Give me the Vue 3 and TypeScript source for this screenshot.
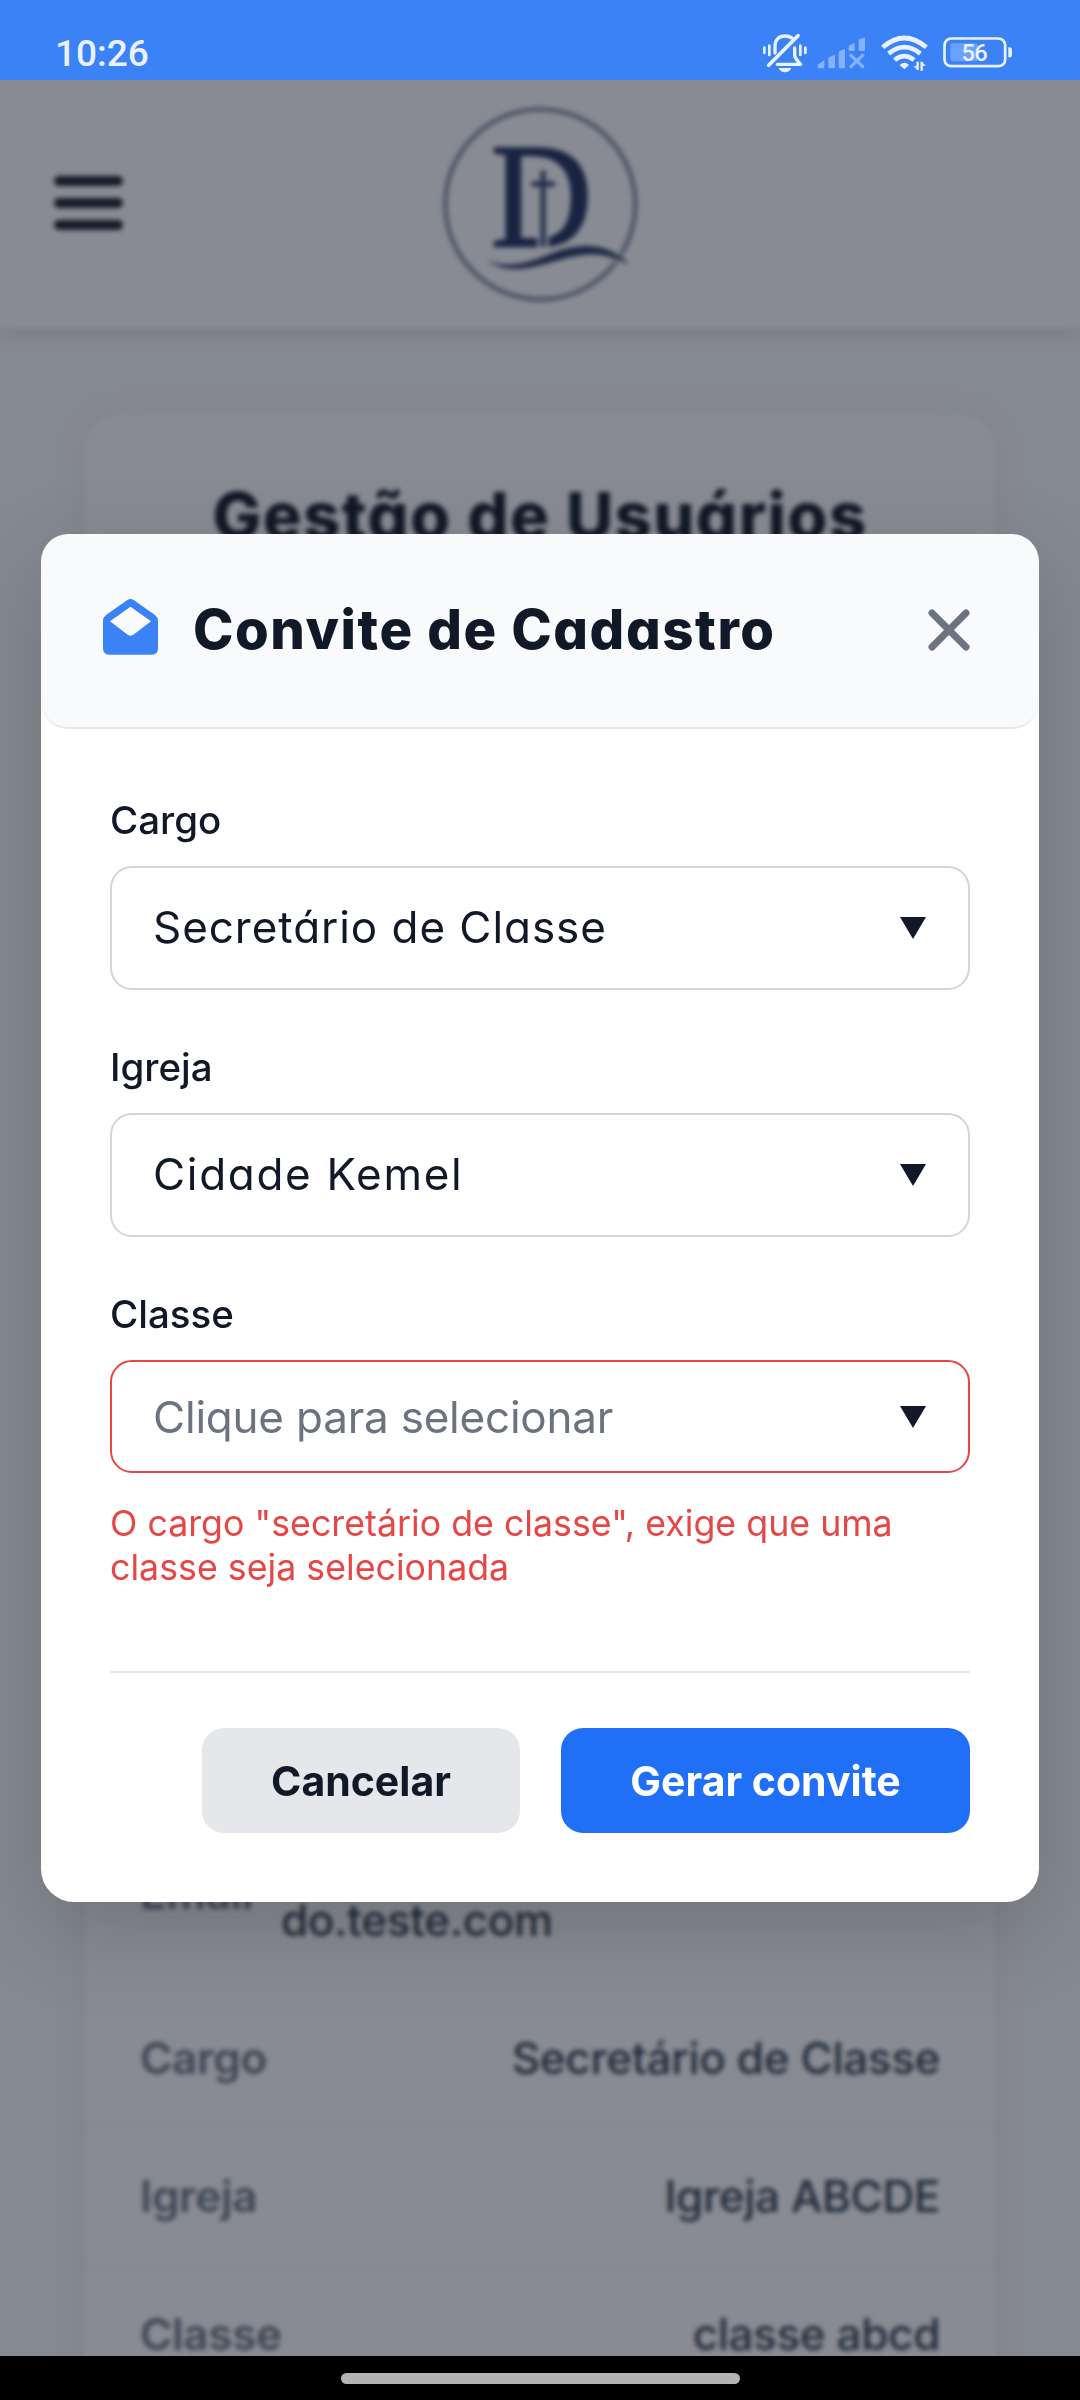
<script setup lang="ts">
interface Field {
  label: string
  value: string
  placeholder?: boolean
  kind: string
}

interface Row {
  label: string
  value: string
}

const fields: Field[] = [
  { label: 'Cargo', value: 'Secretário de Classe', kind: 'role' },
  { label: 'Igreja', value: 'Cidade Kemel', kind: 'church' },
  { label: 'Classe', value: 'Clique para selecionar', placeholder: true, kind: 'class' },
]

const rows: Row[] = [
  { label: 'Cargo', value: 'Secretário de Classe' },
  { label: 'Igreja', value: 'Igreja ABCDE' },
  { label: 'Classe', value: 'classe abcd' },
]

const errorText = 'O cargo "secretário de classe", exige que uma classe seja selecionada'
</script>

<template>
  <div class="screen">
    <div class="status">
      <span class="clock">10:26</span>
      <div class="status-icons">
        <svg class="i-bell" viewBox="66 98 138 120" fill="none" stroke="#eaf2ff" stroke-linecap="round" stroke-linejoin="round">
          <path d="M73 142V158M88 136V164M181 136V164M196 142V158" stroke-width="8" />
          <path d="M105 158V138C105 118 117 107 135 107C143 107 150 109 156 113" stroke-width="10" />
          <path d="M164 143V166Q166 176 182 192H112" stroke-width="10" />
          <path d="M174 106L86 195" stroke-width="11" />
          <path d="M116 203H154Q148 216 135 216Q122 216 116 203Z" fill="#eaf2ff" stroke="none" />
        </svg>
        <svg class="i-signal" viewBox="230 98 146 120" fill="#86b2fb">
          <path d="M232 193L252 179V200Q252 204 248 204H236Q232 204 232 200Z" />
          <path d="M264 176Q264 172 267 170L284 163V200Q284 204 280 204H268Q264 204 264 200Z" />
          <path d="M295 158Q295 154 298 152L314 146V200Q314 204 310 204H299Q295 204 295 200Z" />
          <path d="M325 140Q325 135 329 133L343 128V149Q343 152 340 152H328Q325 152 325 149Z" />
          <path d="M355 122Q355 118 359 116L375 111V149Q375 152 372 152H358Q355 152 355 149Z" />
          <path d="M332 165L367 199M367 165L332 199" stroke="#86b2fb" stroke-width="10" stroke-linecap="round" />
        </svg>
        <svg class="i-wifi" viewBox="424 98 142 120" fill="none" stroke="#eaf2ff">
          <path d="M429 141Q494 85 560 141" stroke-width="14" />
          <path d="M447 160Q494 121 542 160" stroke-width="14" />
          <path d="M465 179Q494 156 523 179" stroke-width="14" />
          <path d="M480 194Q494 180 508 194L494 207Z" fill="#eaf2ff" stroke="none" />
          <path d="M534 184V209M546 184V211" stroke-width="7" />
          <path d="M521 198H534V209ZM546 184V196H559Z" fill="#eaf2ff" stroke="none" />
        </svg>
        <svg class="i-battery" viewBox="608 98 210 120">
          <rect x="630" y="129" width="82" height="54" rx="7" fill="#6ba1fa" />
          <rect x="612.5" y="114.500" width="182" height="83" rx="20" fill="none" stroke="#eaf2ff" stroke-width="8" />
          <path d="M804 141H808Q815 141 815 148V163Q815 171 808 171H804Z" fill="#eaf2ff" />
          <text x="702" y="183" text-anchor="middle" class="batt">56</text>
        </svg>
      </div>
    </div>

    <div class="page">
      <header class="topbar">
        <div class="burger"><i></i><i></i><i></i></div>
        <svg class="logo" viewBox="0 0 720 690">
          <circle cx="361" cy="343" r="285" fill="none" stroke="#8088a0" stroke-width="13" />
          <text x="213" y="469" textLength="303" lengthAdjust="spacingAndGlyphs" class="mark">D</text>
          <path d="M352 440H386V480H352Z" fill="#fff" />
          <path d="M369 242V470M334 282H405" fill="none" stroke="#2f4069" stroke-width="15" />
          <path d="M200 512C290 545 350 520 410 498C480 470 560 460 628 525C560 490 520 490 470 498C400 508 290 570 200 512Z" fill="#fff" stroke="#fff" stroke-width="14" />
          <path d="M200 512C280 540 340 512 400 488C480 457 570 458 628 525C560 490 520 490 470 498C390 510 290 570 200 512Z" fill="#26365f" />
        </svg>
      </header>

      <section class="card">
        <h1>Gestão de Usuários</h1>
        <div class="list">
          <div class="row email">
            <span class="key">Email</span>
            <span class="val">do.teste.com</span>
          </div>
          <div v-for="r in rows" :key="r.label" class="row">
            <span class="key">{{ r.label }}</span>
            <span class="val">{{ r.value }}</span>
          </div>
        </div>
      </section>
    </div>

    <div class="overlay">
      <div class="modal">
        <div class="modal-head">
          <svg class="envelope" viewBox="0 0 165 167">
            <path d="M73 3Q82.500-3 92 3L156 48Q165 55 165 65V148Q165 167 146 167H19Q0 167 0 148V65Q0 55 9 48ZM82.500 23L21 67L72 106Q82.500 114 93 106L144 67Z" fill="#3b82f6" fill-rule="evenodd" />
          </svg>
          <h2>Convite de Cadastro</h2>
          <svg class="close" viewBox="0 0 42 42" fill="none" stroke="#6b7280" stroke-width="7" stroke-linecap="round">
            <path d="M4 4L38 38M38 4L4 38" />
          </svg>
        </div>

        <div class="modal-body">
          <div v-for="f in fields" :key="f.label" class="group">
            <label>{{ f.label }}</label>
            <div class="select" :class="[f.kind, { empty: f.placeholder }]">
              <span>{{ f.value }}</span>
              <svg viewBox="0 0 26 22"><path d="M0 0H26L13 22Z" fill="#111827" /></svg>
            </div>
          </div>
          <p class="error">{{ errorText }}</p>
          <div class="actions">
            <button class="cancel">Cancelar</button>
            <button class="submit">Gerar convite</button>
          </div>
        </div>
      </div>
    </div>

    <div class="nav"><i></i></div>
  </div>
</template>

<style>
body {
  margin: 0;
  overflow: hidden;
}
</style>

<style scoped>
* {
  box-sizing: border-box;
}

.screen {
  position: relative;
  display: flex;
  flex-direction: column;
  width: 1080px;
  height: 2400px;
  overflow: hidden;
  font-family: Inter, sans-serif;
  color: #111827;
  background: #f9fafb;
}

.status {
  display: flex;
  flex: none;
  justify-content: space-between;
  height: 80px;
  padding: 0 67px 0 55px;
  background: #3b82f6;
}

.clock {
  margin-top: 32px;
  font: 500 37px/44px Roboto, sans-serif;
  color: #eaf2ff;
}

.status-icons {
  display: flex;
  margin-top: 32.700px;
}

.status-icons svg {
  height: 40px;
}

.i-bell {
  width: 46px;
}

.i-signal {
  width: 48.670px;
  margin-left: 8.170px;
}

.i-wifi {
  width: 47.330px;
  margin-left: 16px;
}

.i-battery {
  width: 70px;
  margin-left: 14.500px;
}

.batt {
  font: 500 71px Roboto, sans-serif;
  fill: #eaf2ff;
  letter-spacing: -2px;
}

.page {
  flex: 1;
  min-height: 0;
  overflow: hidden;
}

.topbar {
  display: flex;
  align-items: flex-start;
  height: 248px;
  padding: 10px 54px 0;
  background: #fff;
  box-shadow: 0 11px 16.500px -2.750px rgba(0, 0, 0, 0.1);
}

.burger {
  display: flex;
  flex-direction: column;
  gap: 12px;
  width: 69px;
  margin-top: 85.500px;
}

.burger i {
  height: 10px;
  border-radius: 5px;
  background: #1b1e2c;
}

.logo {
  width: 240px;
  height: 230px;
  margin-left: 297px;
}

.mark {
  font: 448px "Liberation Serif", serif;
  fill: #1e2f5a;
  stroke: #1e2f5a;
  stroke-width: 8px;
}

.card {
  display: flex;
  flex-direction: column;
  width: 910px;
  height: 2100px;
  margin: 86px auto 0;
  border-radius: 33px;
  background: #fff;
  box-shadow: 0 3px 44px rgba(0, 0, 0, 0.045), 0 0 5px rgba(0, 0, 0, 0.07);
}

h1 {
  margin: 56px 0 0;
  text-align: center;
  font-size: 65px;
  line-height: 92px;
  font-weight: 800;
  letter-spacing: 1.350px;
  font-feature-settings: "cv11";
  white-space: nowrap;
}

.list {
  margin-top: 1288px;
}

.row {
  display: flex;
  align-items: center;
  justify-content: space-between;
  height: 138px;
  padding: 0 55px;
  border-bottom: 2px solid #f3f4f6;
  font-size: 44px;
  line-height: 66px;
}

.row.email {
  justify-content: flex-start;
  height: 140px;
}

.email .key {
  width: 141px;
  margin-top: -52px;
}

.email .val {
  margin-top: 1px;
}

.key {
  font-weight: 600;
  letter-spacing: -0.300px;
  color: #6b7280;
}

.val {
  font-weight: 450;
  letter-spacing: -0.350px;
  color: #303b4a;
}

.overlay {
  position: absolute;
  top: 80px;
  left: 0;
  width: 1080px;
  height: 2276px;
  overflow: hidden;
  display: flex;
  align-items: center;
  justify-content: center;
  background: rgba(17, 24, 39, 0.5);
  backdrop-filter: blur(2.750px);
}

.modal {
  width: 998px;
  height: 1368px;
  border-radius: 33px;
  background: #fff;
  box-shadow: 0 28px 88px rgba(0, 0, 0, 0.17);
}

.modal-head {
  display: flex;
  align-items: center;
  height: 195px;
  padding: 0 69px 3px 62px;
  border-bottom: 2px solid #e5e7eb;
  border-radius: 27.500px;
  background: #f9fafc;
}

.envelope {
  width: 55px;
  height: 55.700px;
  margin-top: -4px;
}

h2 {
  flex: 1;
  margin: 0 0 0 35px;
  font-size: 54.500px;
  line-height: 66px;
  font-weight: 800;
  letter-spacing: 1.550px;
  font-feature-settings: "cv11";
  white-space: nowrap;
}

.close {
  width: 42px;
  height: 42px;
  margin-top: 1px;
}

.modal-body {
  padding: 61.500px 69px 0;
}

.group {
  margin-bottom: 47.500px;
}

label {
  display: block;
  margin-bottom: 17.500px;
  font-size: 38.500px;
  line-height: 58px;
  font-weight: 500;
}

.select {
  display: flex;
  align-items: center;
  justify-content: space-between;
  height: 124px;
  padding: 0 42px 0 41px;
  border: 2px solid #d1d5db;
  border-radius: 22px;
  font-size: 44px;
  letter-spacing: 0.950px;
  font-feature-settings: "cv11";
}

.select.church {
  letter-spacing: 1.700px;
}

.select span {
  margin-top: -3px;
}

.select svg {
  width: 26px;
  height: 22px;
}

.select.class {
  height: 112.700px;
  border-color: #e84545;
}

.select.class svg {
  margin-top: 2px;
}

.select.empty {
  font-size: 44px;
  letter-spacing: -0.210px;
  font-feature-settings: normal;
  color: #6b7280;
}

.select.empty span {
  margin-top: 1.500px;
}

.error {
  margin: -19px 0 0;
  font-size: 35.750px;
  line-height: 44px;
  color: #e84545;
}

.actions {
  display: flex;
  justify-content: flex-end;
  gap: 41px;
  margin-top: 82px;
  padding-top: 55px;
  border-top: 2px solid #e5e7eb;
}

button {
  height: 105px;
  padding: 1px 0 0;
  border: 0;
  border-radius: 22px;
  font: 700 41px Inter, sans-serif;
  white-space: nowrap;
}

.cancel {
  width: 318px;
  color: #111827;
  background: #e5e7eb;
}

.submit {
  width: 409px;
  color: #fff;
  background: #1f6ff7;
}

.nav {
  position: relative;
  display: flex;
  flex: none;
  justify-content: center;
  height: 44px;
  padding-top: 17px;
  background: #000;
}

.nav i {
  width: 399px;
  height: 11px;
  border-radius: 6px;
  background: #b3b3b3;
}
</style>
